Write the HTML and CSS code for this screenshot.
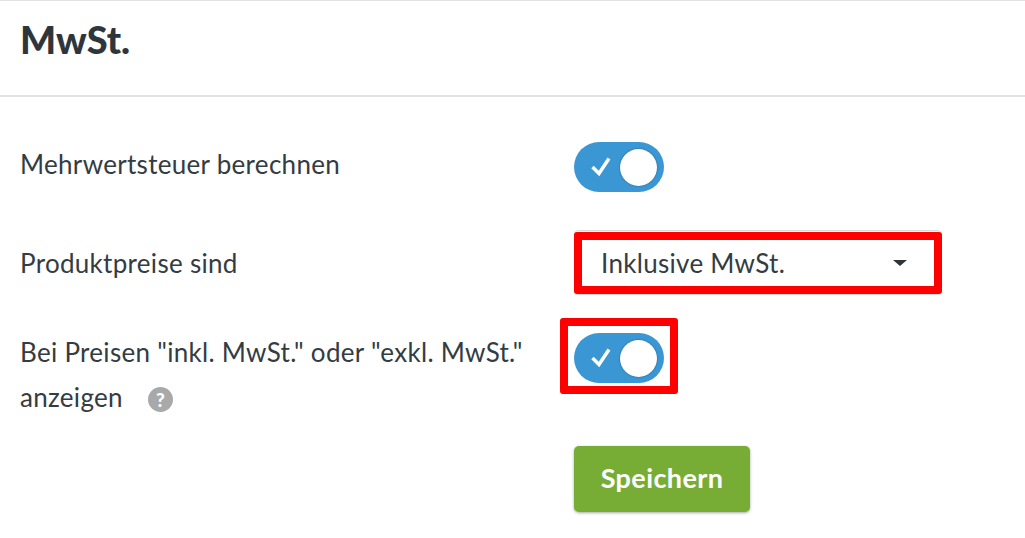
FILE: index.html
```html
<html>
    <head>
        <link rel="stylesheet" href="styles.css">
    </head>
    <body>
        <section class="panel">
            <header class="panel-head">
                <h1>MwSt.</h1>
            </header>
            <form class="tax-form">
                <div class="row row-first">
                    <label>Mehrwertsteuer berechnen</label>
                    <span class="toggle">
                        <svg class="check" viewBox="0 0 20 20"><path d="M1.500 10 L8 16.500 L18 1.500"/></svg>
                        <i class="knob"></i>
                    </span>
                </div>
                <div class="row row-select">
                    <label>Produktpreise sind</label>
                    <div class="select marked">
                        <span>Inklusive MwSt.</span>
                        <i class="caret"></i>
                    </div>
                </div>
                <div class="row row-long">
                    <label>Bei Preisen "inkl. MwSt." oder "exkl. MwSt." anzeigen <span class="help">?</span></label>
                    <span class="toggle marked marked-toggle">
                        <svg class="check" viewBox="0 0 20 20"><path d="M1.500 10 L8 16.500 L18 1.500"/></svg>
                        <i class="knob"></i>
                    </span>
                </div>
                <div class="row row-save">
                    <span></span>
                    <button type="button" class="save">Speichern</button>
                </div>
            </form>
        </section>
    </body>
</html>
```

FILE: styles.css
```css
* { box-sizing: border-box; }

body {
    margin: 0;
    background: #fff;
    color: #333c42;
    font-family: Lato, "Liberation Sans", sans-serif;
    font-size: 26px;
    letter-spacing: .3px;
    overflow: hidden;
}

.panel-head {
    height: 97px;
    padding: 15px 20px 0;
    border-top: 1px solid #e2e2e2;
    border-bottom: 2px solid #e2e2e2;
}

h1 {
    margin: 0;
    color: #2e363b;
    font-size: 38px;
    font-weight: 900;
    letter-spacing: 0;
    line-height: 46px;
}

.tax-form {
    padding: 0 20px;
}

.row {
    display: grid;
    grid-template-columns: 554px 1fr;
    align-items: center;
}

.row-first { padding-top: 45px; }
.row-select { padding-top: 38px; }
.row-long { padding-top: 38px; align-items: start; }
.row-save { padding-top: 26px; }

.row label {
    line-height: 40px;
}

.row-first label {
    margin-top: -6px;
}

.row-long label {
    width: 520px;
    margin-top: -3px;
    line-height: 45px;
}

.help {
    display: inline-flex;
    align-items: center;
    justify-content: center;
    width: 25px;
    height: 25px;
    margin-left: 18px;
    border-radius: 50%;
    background: #a9a9a9;
    color: #fff;
    font-size: 19px;
    font-weight: 900;
    letter-spacing: 0;
}

.toggle {
    position: relative;
    display: flex;
    align-items: center;
    justify-content: space-between;
    width: 90px;
    height: 50px;
    padding: 0 7px 0 17px;
    border-radius: 25px;
    background: #3a97d4;
}

.check {
    width: 20px;
    height: 20px;
    fill: none;
    stroke: #fff;
    stroke-width: 3.500;
}

.knob {
    width: 37px;
    height: 37px;
    border-radius: 50%;
    background: #fff;
    box-shadow: 0 0 2px rgba(0, 0, 0, .4);
}

.select {
    position: relative;
    display: flex;
    align-items: center;
    justify-content: space-between;
    width: 368px;
    height: 65px;
    padding: 0 34px 0 26px;
    border: 1px solid #dcdcdc;
    border-radius: 4px;
    background: #fff;
}

.caret {
    width: 0;
    height: 0;
    border-left: 7px solid transparent;
    border-right: 7px solid transparent;
    border-top: 6px solid #2e363b;
}

/* red annotation frames */
.marked::after {
    content: "";
    position: absolute;
    inset: 1px -1px 0;
    border: 8px solid #f00;
    border-radius: 3px;
}

.marked-toggle::after {
    inset: -15px -14px -11px;
}

.save {
    width: 176px;
    height: 66px;
    padding: 0 0 4px;
    border: 0;
    border-radius: 5px;
    background: #78ad35;
    box-shadow: 0 1px 3px rgba(0, 0, 0, .35);
    color: #fff;
    font-family: inherit;
    font-size: 27px;
    font-weight: 700;
    letter-spacing: .4px;
}
```
